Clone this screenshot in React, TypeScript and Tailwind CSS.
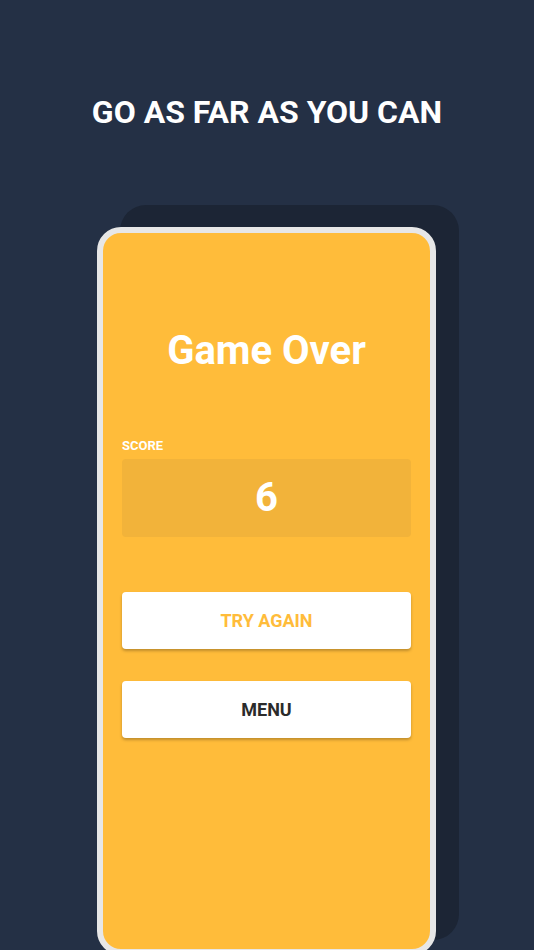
export default function App() {
  return (
    <div className="relative h-[950px] w-full overflow-hidden bg-[#243045] font-['Roboto','Liberation_Sans',sans-serif]">
      <h1 className="pt-[92px] text-center text-[32px] font-bold leading-[40px] text-white">
        GO AS FAR AS YOU CAN
      </h1>

      <div className="relative ml-[97px] mt-[95px] w-[339px]">
        {/* shadow card behind the phone */}
        <div className="absolute left-[23px] top-[-22px] h-[735px] w-[339px] rounded-[26px] bg-[#1c2535]" />

        {/* phone */}
        <div className="relative h-[728px] rounded-[24px] border-[6px] border-[#e7e7e7] bg-[#ffbc3a] px-[19px]">
          <h2 className="pt-[96px] text-center text-[40px] font-bold leading-[44px] text-white">Game Over</h2>

          <p className="mt-[65px] text-[13px] font-bold leading-[16px] text-white">SCORE</p>
          <div className="mt-[5px] flex h-[78px] items-center justify-center rounded-[4px] bg-[#f2b33a]">
            <span className="text-[40px] font-bold leading-none text-white">6</span>
          </div>

          <button className="mt-[55px] flex h-[57px] w-full items-center justify-center rounded-[4px] bg-white text-[18px] font-bold text-[#ffbc3a] shadow-[0_2px_3px_rgba(0,0,0,0.25)]">
            TRY AGAIN
          </button>
          <button className="mt-[32px] flex h-[57px] w-full items-center justify-center rounded-[4px] bg-white text-[18px] font-bold text-[#2b2b2b] shadow-[0_2px_3px_rgba(0,0,0,0.25)]">
            MENU
          </button>
        </div>
      </div>
    </div>
  );
}
